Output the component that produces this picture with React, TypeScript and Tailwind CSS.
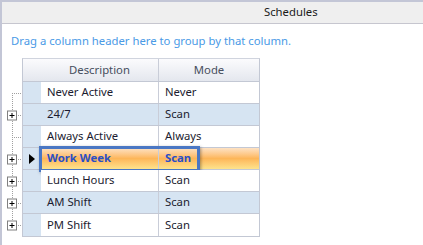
import React from 'react';

type Row = { desc: string; mode: string; expandable: boolean };

const rows: Row[] = [
  { desc: 'Never Active', mode: 'Never', expandable: false },
  { desc: '24/7', mode: 'Scan', expandable: true },
  { desc: 'Always Active', mode: 'Always', expandable: false },
  { desc: 'Work Week', mode: 'Scan', expandable: true },
  { desc: 'Lunch Hours', mode: 'Scan', expandable: true },
  { desc: 'AM Shift', mode: 'Scan', expandable: true },
  { desc: 'PM Shift', mode: 'Scan', expandable: true },
];

const SELECTED = 3;

function TreeGutter() {
  const h = rows.length * 22;
  return (
    <svg width="20" height={h} className="block">
      <line x1="10.5" y1="11" x2="10.5" y2={11 + 22 * (rows.length - 1)} stroke="#a0a0a0" strokeDasharray="1 1" />
      {rows.map((r, i) => {
        const cy = 11 + 22 * i + 0.5;
        return (
          <g key={r.desc}>
            <line x1="10" y1={cy} x2="20" y2={cy} stroke="#a0a0a0" strokeDasharray="1 1" />
            {r.expandable && (
              <>
                <rect x="5.5" y={cy - 4.5} width="9" height="9" fill="#fff" stroke="#808080" />
                <line x1="7.5" y1={cy} x2="12.5" y2={cy} stroke="#000" />
                <line x1="10" y1={cy - 2.5} x2="10" y2={cy + 2.5} stroke="#000" />
              </>
            )}
          </g>
        );
      })}
    </svg>
  );
}

export default function App() {
  return (
    <div
      className="w-[423px] h-[245px] bg-white border-l-2 border-t-2 border-[#c3c6d6] overflow-hidden text-[11.3px]"
      style={{ fontFamily: '"Noto Sans", "Open Sans", sans-serif' }}
    >
      {/* Title bar */}
      <div className="h-[22px] bg-[#efefef] border-b border-[#c6c6cf] flex items-center pl-[262px] text-[#1a1a1a]">
        Schedules
      </div>

      {/* Group panel */}
      <div className="h-[34px] flex items-center pl-[9px] text-[#4a9ae6]">
        Drag a column header here to group by that column.
      </div>

      {/* Grid */}
      <div className="flex">
        <div className="w-[20px] pt-[24px]">
          <TreeGutter />
        </div>
        <div className="w-[238px] border border-[#c3c8d4] border-t-[#d0d4de]">
          <div className="flex h-[23px] border-b border-[#c3c8d4] bg-gradient-to-b from-[#fbfbfd] to-[#e4e7ee] text-[#474f5e]">
            <div className="w-[18px]" />
            <div className="w-[118px] border-r border-[#c9cdd8] flex items-center justify-center">Description</div>
            <div className="flex-1 flex items-center justify-center">Mode</div>
          </div>
          {rows.map((r, i) => {
            const sel = i === SELECTED;
            const bg = sel
              ? 'bg-gradient-to-b from-[#fde2c4] via-[#fdb659] to-[#fde38c]'
              : i % 2 === 1
                ? 'bg-[#d6e4f2]'
                : 'bg-white';
            return (
              <div key={r.desc} className="flex h-[22px] border-b border-[#c3c8d4] last:border-b-0">
                <div className="w-[18px] bg-[#d6e4f2] flex items-center justify-center">
                  {sel && (
                    <svg width="6" height="10" className="block">
                      <path d="M0 0 L6 5 L0 10 Z" fill="#000" />
                    </svg>
                  )}
                </div>
                <div className={`relative flex-1 flex ${bg}`}>
                  <div
                    className={`w-[118px] border-r border-[#c9cdd8] flex items-center pl-[6px] ${
                      sel ? 'font-bold text-[#2a4fc6]' : 'text-[#1c1c30]'
                    }`}
                  >
                    {r.desc}
                  </div>
                  <div
                    className={`flex-1 flex items-center pl-[6px] ${
                      sel ? 'font-bold text-[#2a4fc6]' : 'text-[#1c1c30]'
                    }`}
                  >
                    {r.mode}
                  </div>
                  {sel && (
                    <div className="absolute left-[-2px] top-[-2px] w-[161px] h-[26px] border-[3px] border-[#4a77c4] shadow-[1px_1px_3px_rgba(0,0,0,0.35)]" />
                  )}
                </div>
              </div>
            );
          })}
        </div>
      </div>
    </div>
  );
}
